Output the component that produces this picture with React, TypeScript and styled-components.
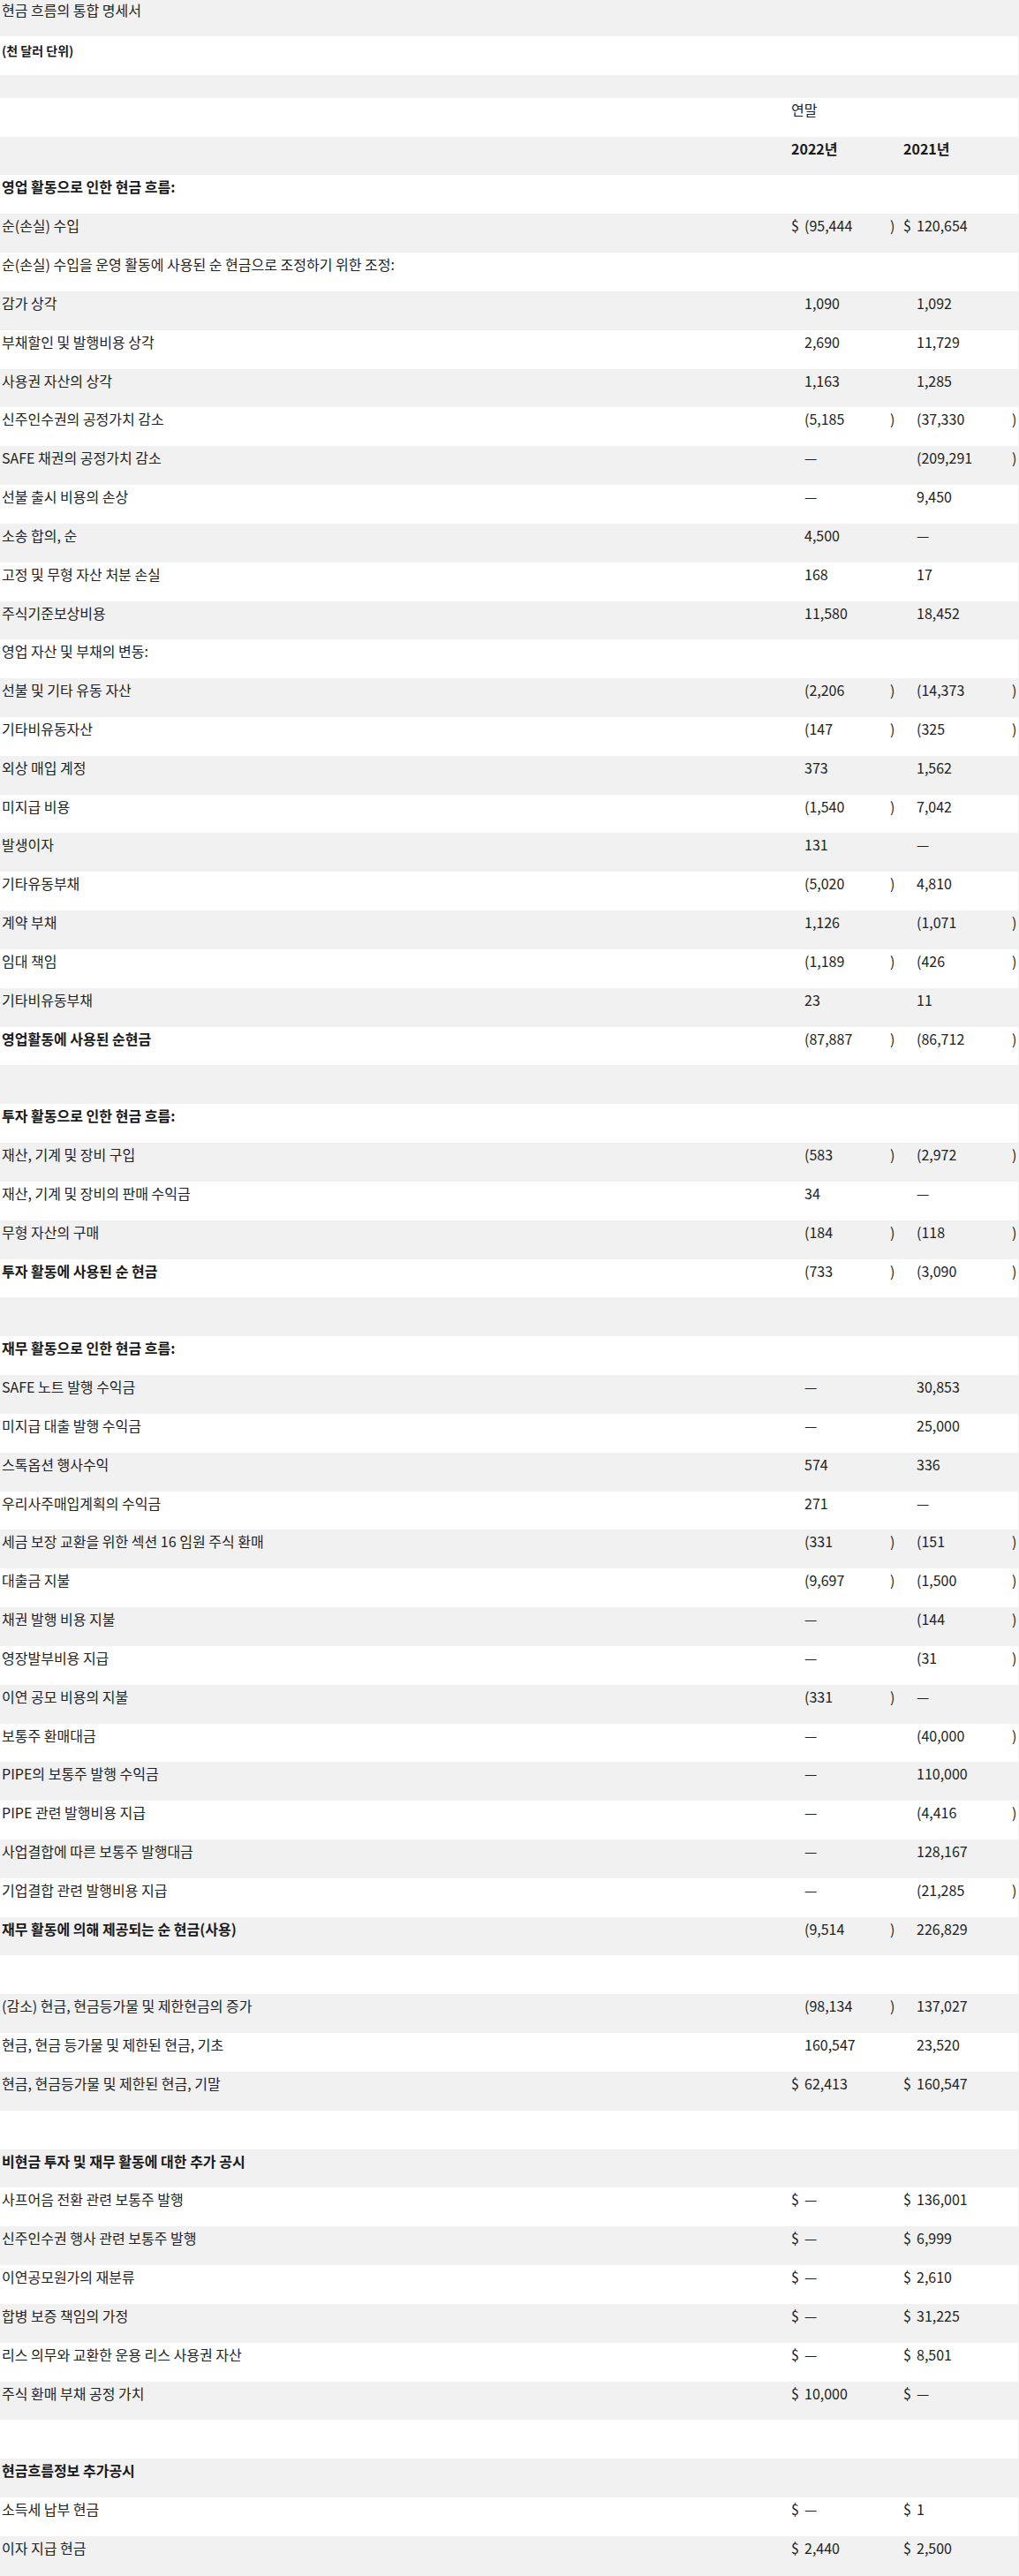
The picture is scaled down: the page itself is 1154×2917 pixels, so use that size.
import React from "react";
import styled, { createGlobalStyle } from "styled-components";

const Global = createGlobalStyle`
  html, body {
    margin: 0;
    padding: 0;
    background: #f1f1f1;
  }
  body {
    font-family: "Noto Sans CJK KR", "Noto Sans", sans-serif;
    font-size: 16px;
    color: #222;
  }
`;

const Table = styled.div`
  width: 1153px;
  display: flex;
  flex-direction: column;
`;

const Row = styled.div<{ $h?: number }>`
  display: grid;
  grid-template-columns: 896px 15px 97px 15px 15px 108px 7px;
  height: ${(p) => p.$h ?? 43.84}px;
  background: #fff;
  align-items: start;
  &:nth-child(odd) {
    background: #f1f1f1;
  }
`;

const Label = styled.div<{ $bold?: boolean; $small?: boolean; $pt?: number }>`
  grid-column: 1;
  padding: ${(p) => p.$pt ?? 2}px 0 0 2px;
  font-size: ${(p) => (p.$small ? 14 : 16)}px;
  font-weight: ${(p) => (p.$bold ? 700 : 400)};
  color: ${(p) => (p.$bold ? "#1a1a1a" : "#222")};
  line-height: 23px;
  white-space: nowrap;
`;

const Cell = styled.div<{ $span?: string; $bold?: boolean }>`
  grid-column: ${(p) => p.$span ?? "auto"};
  padding-top: 2px;
  line-height: 23px;
  font-size: 16px;
  font-weight: ${(p) => (p.$bold ? 700 : 400)};
  color: ${(p) => (p.$bold ? "#1a1a1a" : "#222")};
  white-space: nowrap;
`;

type Val = { d?: boolean; v?: string; n?: boolean };
type Line = {
  label?: string;
  bold?: boolean;
  a?: Val;
  b?: Val;
};

const V = (v: string, d = false): Val => ({ v, d, n: v.startsWith("(") });

const lines: Line[] = [
  { label: "영업 활동으로 인한 현금 흐름:", bold: true },
  { label: "순(손실) 수입", a: V("(95,444", true), b: V("120,654", true) },
  { label: "순(손실) 수입을 운영 활동에 사용된 순 현금으로 조정하기 위한 조정:" },
  { label: "감가 상각", a: V("1,090"), b: V("1,092") },
  { label: "부채할인 및 발행비용 상각", a: V("2,690"), b: V("11,729") },
  { label: "사용권 자산의 상각", a: V("1,163"), b: V("1,285") },
  { label: "신주인수권의 공정가치 감소", a: V("(5,185"), b: V("(37,330") },
  { label: "SAFE 채권의 공정가치 감소", a: V("—"), b: V("(209,291") },
  { label: "선불 출시 비용의 손상", a: V("—"), b: V("9,450") },
  { label: "소송 합의, 순", a: V("4,500"), b: V("—") },
  { label: "고정 및 무형 자산 처분 손실", a: V("168"), b: V("17") },
  { label: "주식기준보상비용", a: V("11,580"), b: V("18,452") },
  { label: "영업 자산 및 부채의 변동:" },
  { label: "선불 및 기타 유동 자산", a: V("(2,206"), b: V("(14,373") },
  { label: "기타비유동자산", a: V("(147"), b: V("(325") },
  { label: "외상 매입 계정", a: V("373"), b: V("1,562") },
  { label: "미지급 비용", a: V("(1,540"), b: V("7,042") },
  { label: "발생이자", a: V("131"), b: V("—") },
  { label: "기타유동부채", a: V("(5,020"), b: V("4,810") },
  { label: "계약 부채", a: V("1,126"), b: V("(1,071") },
  { label: "임대 책임", a: V("(1,189"), b: V("(426") },
  { label: "기타비유동부채", a: V("23"), b: V("11") },
  { label: "영업활동에 사용된 순현금", bold: true, a: V("(87,887"), b: V("(86,712") },
  {},
  { label: "투자 활동으로 인한 현금 흐름:", bold: true },
  { label: "재산, 기계 및 장비 구입", a: V("(583"), b: V("(2,972") },
  { label: "재산, 기계 및 장비의 판매 수익금", a: V("34"), b: V("—") },
  { label: "무형 자산의 구매", a: V("(184"), b: V("(118") },
  { label: "투자 활동에 사용된 순 현금", bold: true, a: V("(733"), b: V("(3,090") },
  {},
  { label: "재무 활동으로 인한 현금 흐름:", bold: true },
  { label: "SAFE 노트 발행 수익금", a: V("—"), b: V("30,853") },
  { label: "미지급 대출 발행 수익금", a: V("—"), b: V("25,000") },
  { label: "스톡옵션 행사수익", a: V("574"), b: V("336") },
  { label: "우리사주매입계획의 수익금", a: V("271"), b: V("—") },
  { label: "세금 보장 교환을 위한 섹션 16 임원 주식 환매", a: V("(331"), b: V("(151") },
  { label: "대출금 지불", a: V("(9,697"), b: V("(1,500") },
  { label: "채권 발행 비용 지불", a: V("—"), b: V("(144") },
  { label: "영장발부비용 지급", a: V("—"), b: V("(31") },
  { label: "이연 공모 비용의 지불", a: V("(331"), b: V("—") },
  { label: "보통주 환매대금", a: V("—"), b: V("(40,000") },
  { label: "PIPE의 보통주 발행 수익금", a: V("—"), b: V("110,000") },
  { label: "PIPE 관련 발행비용 지급", a: V("—"), b: V("(4,416") },
  { label: "사업결합에 따른 보통주 발행대금", a: V("—"), b: V("128,167") },
  { label: "기업결합 관련 발행비용 지급", a: V("—"), b: V("(21,285") },
  { label: "재무 활동에 의해 제공되는 순 현금(사용)", bold: true, a: V("(9,514"), b: V("226,829") },
  {},
  { label: "(감소) 현금, 현금등가물 및 제한현금의 증가", a: V("(98,134"), b: V("137,027") },
  { label: "현금, 현금 등가물 및 제한된 현금, 기초", a: V("160,547"), b: V("23,520") },
  { label: "현금, 현금등가물 및 제한된 현금, 기말", a: V("62,413", true), b: V("160,547", true) },
  {},
  { label: "비현금 투자 및 재무 활동에 대한 추가 공시", bold: true },
  { label: "사프어음 전환 관련 보통주 발행", a: V("—", true), b: V("136,001", true) },
  { label: "신주인수권 행사 관련 보통주 발행", a: V("—", true), b: V("6,999", true) },
  { label: "이연공모원가의 재분류", a: V("—", true), b: V("2,610", true) },
  { label: "합병 보증 책임의 가정", a: V("—", true), b: V("31,225", true) },
  { label: "리스 의무와 교환한 운용 리스 사용권 자산", a: V("—", true), b: V("8,501", true) },
  { label: "주식 환매 부채 공정 가치", a: V("10,000", true), b: V("—", true) },
  {},
  { label: "현금흐름정보 추가공시", bold: true },
  { label: "소득세 납부 현금", a: V("—", true), b: V("1", true) },
  { label: "이자 지급 현금", a: V("2,440", true), b: V("2,500", true) },
];

const Amount: React.FC<{ val?: Val; start: number }> = ({ val, start }) => {
  if (!val) return null;
  return (
    <>
      <Cell $span={`${start}`}>{val.d ? "$" : ""}</Cell>
      <Cell $span={`${start + 1}`}>{val.v}</Cell>
      <Cell $span={`${start + 2}`}>{val.n ? ")" : ""}</Cell>
    </>
  );
};

export default function App() {
  return (
    <>
      <Global />
      <Table>
        <Row $h={41}>
          <Label $pt={0}>현금 흐름의 통합 명세서</Label>
        </Row>
        <Row $h={43.84}>
          <Label $bold $small $pt={5}>
            (천 달러 단위)
          </Label>
        </Row>
        <Row $h={25.91} />
        <Row>
          <Cell $span="2 / 8">연말</Cell>
        </Row>
        <Row>
          <Cell $span="2 / 5" $bold>
            2022년
          </Cell>
          <Cell $span="5 / 8" $bold>
            2021년
          </Cell>
        </Row>
        {lines.map((l, i) => (
          <Row key={i}>
            <Label $bold={l.bold}>{l.label ?? ""}</Label>
            <Amount val={l.a} start={2} />
            <Amount val={l.b} start={5} />
          </Row>
        ))}
      </Table>
    </>
  );
}
